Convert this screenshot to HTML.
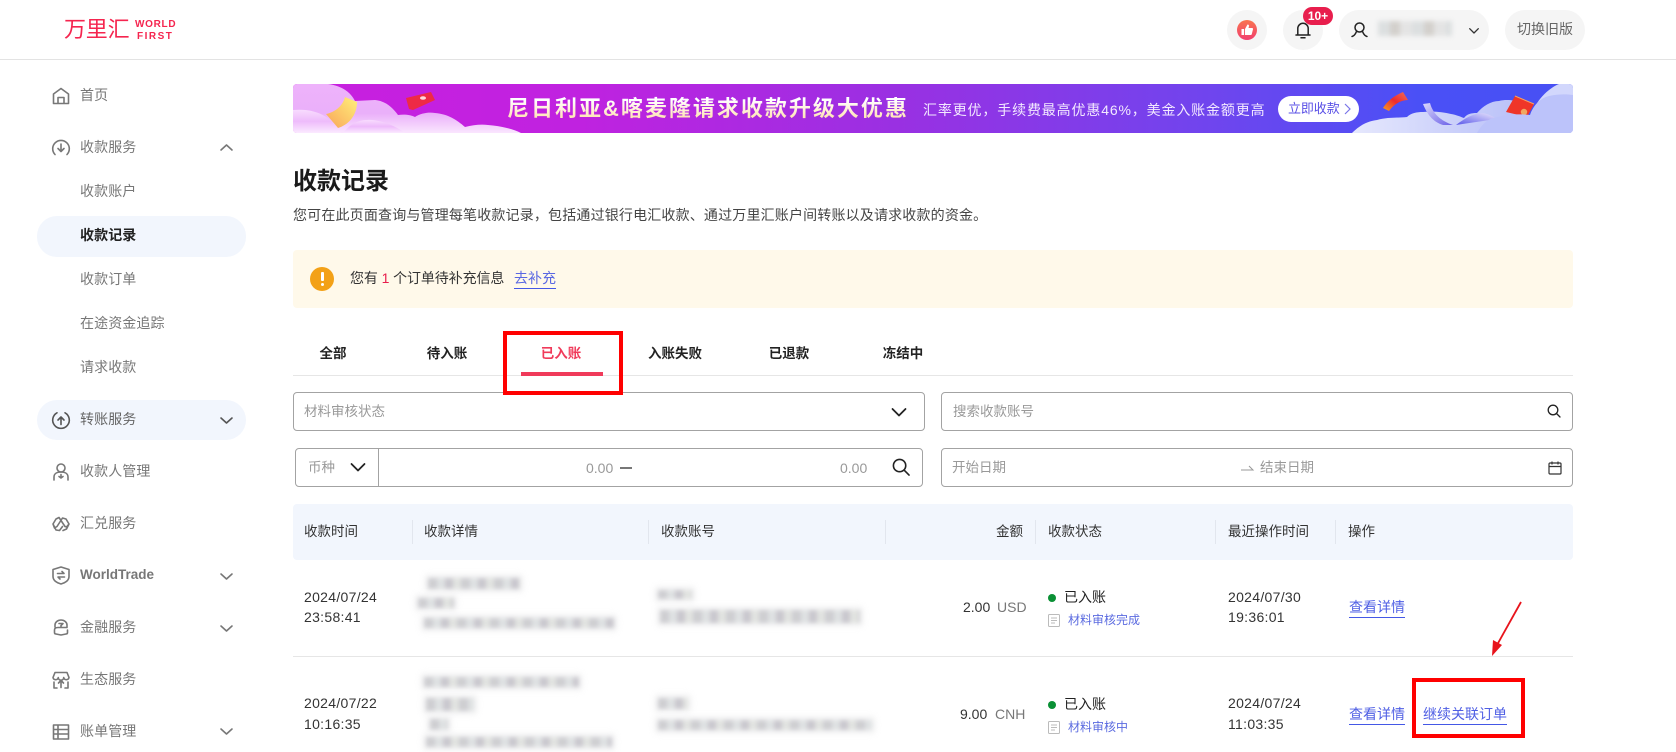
<!DOCTYPE html>
<html lang="zh"><head><meta charset="utf-8"><title>收款记录</title>
<style>
*{box-sizing:border-box;margin:0;padding:0}
html,body{width:1676px;height:752px;overflow:hidden;background:#fff}
body{position:relative;font-family:"Liberation Sans","Noto Sans CJK SC",sans-serif;font-size:14px;color:#222}
.a,.t{position:absolute;white-space:nowrap}
.t{line-height:20px}
.nav{color:#777;left:80px;letter-spacing:.1px}
.tab{font-weight:700;transform:translateX(-50%);color:#222;font-size:13.5px}
.h{color:#333;top:522px;font-size:13.5px}
.sep{position:absolute;top:520px;width:1px;height:24px;background:#e2e6ee}
.box{position:absolute;border:1px solid #a3a3a3;border-radius:4px}
.ph{color:#999}
.link{color:#4f5fe4;border-bottom:1px solid #4458e6;line-height:19px;position:absolute;white-space:nowrap}
.bl{position:absolute;filter:blur(2.2px);opacity:.9;box-shadow:0 0 6px 3px #eeeeef;background:repeating-linear-gradient(90deg,#c9c9cd 0 9px,#dcdfe0 9px 17px,#c4c2c9 17px 25px,#dfe1de 25px 33px)}
svg{position:absolute;overflow:visible}
.ic{fill:none;stroke:#777;stroke-width:1.6;stroke-linecap:round;stroke-linejoin:round}
</style></head><body>

<!-- header -->
<div class="a" style="left:0;top:59px;width:1676px;height:1px;background:#e3e3e3"></div>
<div class="a" style="left:64px;top:15px;font-size:22px;line-height:30px;color:#f5254f;letter-spacing:-.2px">万里汇</div>
<div class="a" style="left:135px;top:19px;font:700 10px/11px 'Liberation Sans',sans-serif;color:#f5254f;letter-spacing:.7px">WORLD</div>
<div class="a" style="left:137px;top:31px;font:700 10px/11px 'Liberation Sans',sans-serif;color:#f5254f;letter-spacing:1.5px">FIRST</div>

<div class="a" style="left:1227px;top:10px;width:40px;height:40px;border-radius:50%;background:#f5f5f5"></div>
<svg style="left:1237px;top:20px" width="20" height="20" viewBox="0 0 20 20"><defs><linearGradient id="th" x1="0" y1="0" x2="0" y2="1"><stop offset="0" stop-color="#f8744f"/><stop offset="1" stop-color="#f23f6f"/></linearGradient></defs><circle cx="10" cy="10" r="10" fill="url(#th)"/><path d="M4.500 9h2.600v6H4.500zM8 9l2.500-4.500c1.200 0 1.700.8 1.400 2L11.500 8H15c.8 0 1.200.6 1 1.300l-1.200 4.800c-.2.600-.6.900-1.200.9H8z" fill="#fff"/></svg>
<div class="a" style="left:1283px;top:10px;width:40px;height:40px;border-radius:50%;background:#f5f5f5"></div>
<svg style="left:1295px;top:21px" width="16" height="18" viewBox="0 0 16 18" fill="none" stroke="#222" stroke-width="1.500" stroke-linecap="round" stroke-linejoin="round"><path d="M1 14h14M2.800 14V7.500a5.200 5.200 0 0 1 10.400 0V14M6 16.800h4"/></svg>
<div class="a" style="left:1303px;top:7px;width:30px;height:18px;border-radius:9px;background:#e81e4d;color:#fff;font-size:12px;font-weight:700;line-height:18px;text-align:center">10+</div>
<div class="a" style="left:1339px;top:10px;width:150px;height:40px;border-radius:20px;background:#f5f5f5"></div>
<svg style="left:1351px;top:22px" width="17" height="16" viewBox="0 0 17 16" fill="none" stroke="#222" stroke-width="1.500" stroke-linecap="round"><circle cx="8.500" cy="5.500" r="4.500"/><path d="M5.500 9.500C4.500 12 3 14 1 14.500M11.500 9.500c1 2.500 2.500 4.500 4.500 5"/></svg>
<div class="a" style="left:1378px;top:21px;width:74px;height:15px;filter:blur(2.500px);background:repeating-linear-gradient(90deg,#dcdfe0 0 12px,#d3d0cc 12px 22px,#e4e4e4 22px 34px)"></div>
<svg style="left:1469px;top:28px" width="10" height="6" viewBox="0 0 10 6" fill="none" stroke="#333" stroke-width="1.300" stroke-linecap="round" stroke-linejoin="round"><path d="M.7.7L5 5 9.300.7"/></svg>
<div class="a" style="left:1505px;top:10px;width:80px;height:40px;border-radius:20px;background:#f5f5f5;color:#666;line-height:38px;text-align:center">切换旧版</div>

<!-- sidebar -->
<div class="a" style="left:37px;top:216px;width:209px;height:41px;border-radius:20px;background:#f2f6fd"></div>
<div class="a" style="left:37px;top:400px;width:209px;height:40px;border-radius:20px;background:#f2f6fd"></div>
<div class="t nav" style="top:85px">首页</div>
<div class="t nav" style="top:137px">收款服务</div>
<div class="t nav" style="top:181px">收款账户</div>
<div class="t nav" style="top:225px;color:#222;font-weight:700">收款记录</div>
<div class="t nav" style="top:269px">收款订单</div>
<div class="t nav" style="top:313px">在途资金追踪</div>
<div class="t nav" style="top:357px">请求收款</div>
<div class="t nav" style="top:409px;color:#666">转账服务</div>
<div class="t nav" style="top:461px">收款人管理</div>
<div class="t nav" style="top:513px">汇兑服务</div>
<div class="t nav" style="top:565px;font-weight:700;letter-spacing:0;font-size:13.500px">WorldTrade</div>
<div class="t nav" style="top:617px">金融服务</div>
<div class="t nav" style="top:669px">生态服务</div>
<div class="t nav" style="top:721px">账单管理</div>

<svg class="ic" style="left:52px;top:87px" width="18" height="18" viewBox="0 0 18 18"><path d="M1.500 16.500V7L9 1.500 16.500 7v9.500zM6 16.500v-6h6v6"/></svg>
<svg class="ic" style="left:52px;top:139px" width="18" height="18" viewBox="0 0 18 18"><path d="M3 15.500A8.300 8.300 0 1 1 15 15.500M9 5v7.500M6 9.500l3 3 3-3"/></svg>
<svg class="ic" style="left:52px;top:411px;stroke:#555" width="18" height="18" viewBox="0 0 18 18"><path d="M5 1.800A8.300 8.300 0 1 0 13 1.800M9 13.500V6M6 9l3-3 3 3"/></svg>
<svg class="ic" style="left:53px;top:463px" width="16" height="18" viewBox="0 0 16 18"><circle cx="8" cy="5" r="4"/><path d="M1 17v-3c0-3 2.500-5 7-5s7 2 7 5v3M8 11.500V15M6 13.500l2 1.500 2-1.500"/></svg>
<svg class="ic" style="left:52px;top:516px" width="18" height="16" viewBox="0 0 18 16"><path d="M1 8l3-5 3-1.500 6 9 1.500.5L17 8l-3-5-3.500-1L5 10.500 2.500 12zM1 8l3 6 3.500.5 3-4M17 8l-2.500 5-3.500 1.500"/></svg>
<svg class="ic" style="left:52px;top:566px" width="18" height="19" viewBox="0 0 18 19"><path d="M9 1l8 2.500v7c0 4-4 6.500-8 7.500-4-1-8-3.500-8-7.500v-7zM5.500 7.500H12L10 5.500M12.500 11H6l2 2"/></svg>
<svg class="ic" style="left:53px;top:619px" width="16" height="17" viewBox="0 0 16 17"><path d="M2 8V6a6 5 0 0 1 12 0v2.500H5c-2.500 0-3.500 1-3.500 2.500v2.500c0 1 .5 1.500 1.500 1.500l5 1 5-1c1 0 1.500-.5 1.500-1.500V11M6 4.500h4l-2 2v2"/></svg>
<svg class="ic" style="left:52px;top:671px" width="18" height="18" viewBox="0 0 18 18"><path d="M1 6.500L3 1.500h12l2 5a2.700 2.700 0 0 1-5.300 0 2.700 2.700 0 0 1-5.400 0 2.700 2.700 0 0 1-5.300 0zM2 11v6h3M16 11v6h-3M9 16.500V10M6.500 12L9 9.500l2.500 2.500"/></svg>
<svg class="ic" style="left:52px;top:723px" width="18" height="18" viewBox="0 0 18 18"><path d="M1.500 2h15v14h-15zM1.500 6.500h15M1.500 11h15M6 2v14"/></svg>

<svg class="ic" style="left:220px;top:144px" width="13" height="7" viewBox="0 0 13 7"><path d="M1 6l5.500-5L12 6"/></svg>
<svg class="ic" style="left:220px;top:417px;stroke:#555" width="13" height="7" viewBox="0 0 13 7"><path d="M1 1l5.500 5L12 1"/></svg>
<svg class="ic" style="left:220px;top:573px" width="13" height="7" viewBox="0 0 13 7"><path d="M1 1l5.500 5L12 1"/></svg>
<svg class="ic" style="left:220px;top:625px" width="13" height="7" viewBox="0 0 13 7"><path d="M1 1l5.500 5L12 1"/></svg>
<svg class="ic" style="left:220px;top:728px" width="13" height="7" viewBox="0 0 13 7"><path d="M1 1l5.500 5L12 1"/></svg>

<!-- banner -->
<div class="a" style="left:293px;top:84px;width:1280px;height:49px;border-radius:4px;overflow:hidden;background:linear-gradient(90deg,#c81fdf 0%,#c022e0 22%,#9a30e2 47%,#6f45ee 72%,#4a50f6 88%,#4750f4 100%)">
<svg style="left:0;top:0" width="1280" height="49" viewBox="0 0 1280 49">
<defs>
<linearGradient id="cl" x1="0" y1="0" x2="0" y2="1"><stop offset="0" stop-color="#eeb2fb"/><stop offset=".6" stop-color="#eab0fa"/><stop offset="1" stop-color="#fae6fe"/></linearGradient>
<linearGradient id="cl2" x1="0" y1="0" x2="0" y2="1"><stop offset="0" stop-color="#f8dcfe"/><stop offset=".5" stop-color="#eebbfb"/><stop offset="1" stop-color="#fbeaff"/></linearGradient>
<linearGradient id="cr" x1="0" y1="0" x2="1" y2="0"><stop offset="0" stop-color="#e6e8fd"/><stop offset="1" stop-color="#b6bef8"/></linearGradient>
<linearGradient id="moon" x1="1" y1="0" x2="0" y2="1"><stop offset="0" stop-color="#fff07a"/><stop offset="1" stop-color="#f9a45a"/></linearGradient>
<linearGradient id="rb" x1="0" y1="1" x2="1" y2="0"><stop offset="0" stop-color="#f8a020"/><stop offset=".5" stop-color="#ee2a2e"/><stop offset="1" stop-color="#f0705a"/></linearGradient>
<linearGradient id="rp" x1="0" y1="0" x2="1" y2="1"><stop offset="0" stop-color="#dcd8fb"/><stop offset="1" stop-color="#6a60e8"/></linearGradient>
<linearGradient id="rp2" x1="0" y1="1" x2="1" y2="0"><stop offset="0" stop-color="#5a58ea"/><stop offset="1" stop-color="#ece8fd"/></linearGradient>
</defs>
<!-- left clouds -->
<path d="M0 0H35C50 2 58 9 62 17L82 16C93 17 100 24 105 31C112 30 118 31 122 33C128 29 136 28 142 29C155 30 164 36 172 43C180 41 188 40 195 41C208 42 220 45 228 49H0z" fill="url(#cl)"/>
<path d="M52 13L64 18C64 32 55 41 45 44L33 30C43 28 50 21 52 13z" fill="url(#moon)"/>
<path d="M0 26C22 24 38 32 48 49H0z" fill="url(#cl2)"/>
<path d="M50 49C57 40 65 36 74 36C84 35 100 40 112 49z" fill="url(#cl2)"/>
<path d="M113 14L138 8l4 8-22 10-4-1z" fill="#ee2a46"/>
<ellipse cx="130" cy="14" rx="3" ry="1.800" fill="#ffd8dc"/>
<!-- right clouds -->
<path d="M1239 30C1244 14 1258 3 1266 0H1280V49H1230z" fill="#d2d7fc"/>
<path d="M1059 49C1068 40 1076 37 1084 36C1095 33 1105 34 1114 33C1118 29 1124 28 1130 28C1140 27 1150 28 1158 30C1164 31 1168 33 1171 34C1174 30 1178 29 1184 29C1190 22 1198 17 1206 17C1214 15 1222 16 1232 20L1240 49z" fill="url(#cr)"/>
<path d="M1130 20L1137 19C1140 30 1148 37 1160 41L1150 41C1140 38 1134 30 1130 20z" fill="url(#rp)"/>
<path d="M1163 41C1172 34 1180 30 1188 29C1192 29 1198 31 1204 35C1190 37 1176 39 1163 41z" fill="url(#rp2)"/>
<path d="M1222 12L1241 20 1234 33 1213 28z" fill="#ef3528"/>
<path d="M1222 12L1241 20" stroke="#f8a060" stroke-width="1"/>
<circle cx="1231" cy="28" r="3.200" fill="#f0a860"/>
<path d="M1184 49C1190 38 1197 34 1205 33C1215 30 1228 30 1237 31C1240 22 1247 14 1256 12C1265 10 1273 10 1280 11V49z" fill="#bcc3fa"/>
<path d="M1090 24C1095 16 1103 11 1110 8L1115 16C1108 16 1101 20 1096 27z" fill="url(#rb)"/>
</svg>
</div>
<div class="a" style="left:507px;top:94px;font-size:22px;line-height:30px;font-weight:700;letter-spacing:2px;background:linear-gradient(180deg,#fff 20%,#ffe2b0 85%);-webkit-background-clip:text;background-clip:text;color:transparent">尼日利亚&amp;喀麦隆请求收款升级大优惠</div>
<div class="a" style="left:923px;top:100px;line-height:21px;color:#f3e9ff;letter-spacing:.85px">汇率更优，手续费最高优惠46%，美金入账金额更高</div>
<div class="a" style="left:1278px;top:96px;width:81px;height:26px;border-radius:13px;background:#fff"></div>
<div class="a" style="left:1288px;top:99px;line-height:20px;color:#5a50e6;font-size:13px;letter-spacing:-.1px">立即收款</div>
<svg style="left:1344px;top:103px" width="7" height="12" viewBox="0 0 7 12" fill="none" stroke="#7a75e8" stroke-width="1.200"><path d="M1 1l5 5-5 5"/></svg>

<!-- title -->
<div class="a" style="left:293px;top:165px;font-size:24px;line-height:34px;font-weight:700;color:#1a1a1a">收款记录</div>
<div class="t" style="left:293px;top:205px;color:#444;letter-spacing:.17px">您可在此页面查询与管理每笔收款记录，包括通过银行电汇收款、通过万里汇账户间转账以及请求收款的资金。</div>

<!-- alert -->
<div class="a" style="left:293px;top:250px;width:1280px;height:58px;border-radius:4px;background:#fff9ea"></div>
<div class="a" style="left:310px;top:267px;width:24px;height:24px;border-radius:50%;background:#f3a117"></div>
<div class="a" style="left:320.500px;top:272px;width:3px;height:9px;background:#fff;border-radius:1px"></div>
<div class="a" style="left:320.500px;top:283px;width:3px;height:3px;background:#fff;border-radius:50%"></div>
<div class="t" style="left:350px;top:268px;color:#333;letter-spacing:-.1px">您有 <span style="color:#e81e4d">1</span> 个订单待补充信息</div>
<div class="link" style="left:514px;top:269px;color:#5a68e2">去补充</div>

<!-- tabs -->
<div class="a" style="left:293px;top:375px;width:1280px;height:1px;background:#e6e6e6"></div>
<div class="t tab" style="left:333px;top:344px">全部</div>
<div class="t tab" style="left:447px;top:344px">待入账</div>
<div class="t tab" style="left:561px;top:344px;color:#f03a5a">已入账</div>
<div class="t tab" style="left:675px;top:344px">入账失败</div>
<div class="t tab" style="left:789px;top:344px">已退款</div>
<div class="t tab" style="left:903px;top:344px">冻结中</div>
<div class="a" style="left:521px;top:372px;width:82px;height:4px;background:#f03a5a"></div>

<!-- filters -->
<div class="box" style="left:293px;top:392px;width:632px;height:39px"></div>
<div class="t ph" style="left:304px;top:402px;font-size:13.500px">材料审核状态</div>
<svg style="left:891px;top:408px" width="16" height="9" viewBox="0 0 16 9" fill="none" stroke="#222" stroke-width="1.800" stroke-linecap="round" stroke-linejoin="round"><path d="M1.500 1L8 7.500 14.500 1"/></svg>
<div class="box" style="left:941px;top:392px;width:632px;height:39px"></div>
<div class="t ph" style="left:953px;top:402px;font-size:13.500px">搜索收款账号</div>
<svg style="left:1547px;top:404px" width="14" height="14" viewBox="0 0 14 14" fill="none" stroke="#222" stroke-width="1.300" stroke-linecap="round"><circle cx="6" cy="6" r="4.800"/><path d="M9.500 9.500l3.500 3.500"/></svg>

<div class="box" style="left:295px;top:448px;width:628px;height:39px"></div>
<div class="a" style="left:378px;top:448px;width:1px;height:39px;background:#a3a3a3"></div>
<div class="t ph" style="left:308px;top:458px;font-size:13.500px">币种</div>
<svg style="left:350px;top:463px" width="16" height="9" viewBox="0 0 16 9" fill="none" stroke="#222" stroke-width="1.800" stroke-linecap="round" stroke-linejoin="round"><path d="M1.500 1L8 7.500 14.500 1"/></svg>
<div class="t ph" style="left:586px;top:458px">0.00</div>
<div class="a" style="left:620px;top:467px;width:12px;height:2px;background:#777"></div>
<div class="t ph" style="left:840px;top:458px">0.00</div>
<svg style="left:892px;top:458px" width="18" height="18" viewBox="0 0 19 19" fill="none" stroke="#222" stroke-width="1.700" stroke-linecap="round"><circle cx="8" cy="8" r="6.500"/><path d="M13 13l5 5"/></svg>

<div class="box" style="left:941px;top:448px;width:632px;height:39px"></div>
<div class="t ph" style="left:952px;top:458px;font-size:13.500px">开始日期</div>
<svg style="left:1241px;top:465px" width="13" height="7" viewBox="0 0 13 7" fill="none" stroke="#999" stroke-width="1"><path d="M0 5h12L8 1"/></svg>
<div class="t ph" style="left:1260px;top:458px;font-size:13.500px">结束日期</div>
<svg style="left:1548px;top:461px" width="14" height="14" viewBox="0 0 14 14" fill="none" stroke="#333" stroke-width="1.200"><rect x="1" y="2" width="12" height="11" rx="1"/><path d="M1 5.500h12M4 .5v3M10 .5v3"/></svg>

<!-- table head -->
<div class="a" style="left:293px;top:504px;width:1280px;height:56px;border-radius:4px;background:#f2f6fd"></div>
<div class="t h" style="left:304px">收款时间</div>
<div class="t h" style="left:424px">收款详情</div>
<div class="t h" style="left:661px">收款账号</div>
<div class="t h" style="left:996px">金额</div>
<div class="t h" style="left:1048px">收款状态</div>
<div class="t h" style="left:1228px">最近操作时间</div>
<div class="t h" style="left:1348px">操作</div>
<div class="sep" style="left:412px"></div><div class="sep" style="left:648px"></div><div class="sep" style="left:885px"></div><div class="sep" style="left:1035px"></div><div class="sep" style="left:1215px"></div><div class="sep" style="left:1335px"></div>

<!-- row 1 -->
<div class="a" style="left:293px;top:656px;width:1280px;height:1px;background:#e6e6e6"></div>
<div class="t" style="left:304px;top:587px;letter-spacing:.3px;color:#333">2024/07/24</div>
<div class="t" style="left:304px;top:607px;letter-spacing:.3px;color:#333">23:58:41</div>
<div class="bl" style="left:428px;top:578px;width:92px;height:11px"></div>
<div class="bl" style="left:418px;top:598px;width:36px;height:10px"></div>
<div class="bl" style="left:424px;top:618px;width:190px;height:10px"></div>
<div class="bl" style="left:658px;top:590px;width:34px;height:9px"></div>
<div class="bl" style="left:660px;top:610px;width:200px;height:13px"></div>
<div class="t" style="left:963px;top:597px;color:#333">2.00</div>
<div class="t" style="left:997px;top:597px;color:#777">USD</div>
<div class="a" style="left:1048px;top:594px;width:8px;height:8px;border-radius:50%;background:#0a9035"></div>
<div class="t" style="left:1064px;top:587px;color:#222">已入账</div>
<svg style="left:1048px;top:614px" width="12" height="13" viewBox="0 0 12 13" fill="none" stroke="#bbb" stroke-width="1"><rect x=".5" y=".5" width="11" height="12" rx="1"/><path d="M3 4h6M3 6.500h6M3 9h4"/></svg>
<div class="a" style="left:1068px;top:612px;font-size:12px;line-height:17px;color:#5b6be0">材料审核完成</div>
<div class="t" style="left:1228px;top:587px;letter-spacing:.3px;color:#333">2024/07/30</div>
<div class="t" style="left:1228px;top:607px;letter-spacing:.3px;color:#333">19:36:01</div>
<div class="link" style="left:1349px;top:598px">查看详情</div>

<!-- row 2 -->
<div class="t" style="left:304px;top:693px;letter-spacing:.3px;color:#333">2024/07/22</div>
<div class="t" style="left:304px;top:714px;letter-spacing:.3px;color:#333">10:16:35</div>
<div class="bl" style="left:424px;top:677px;width:155px;height:10px"></div>
<div class="bl" style="left:426px;top:698px;width:48px;height:13px"></div>
<div class="bl" style="left:430px;top:719px;width:18px;height:11px"></div>
<div class="bl" style="left:426px;top:737px;width:186px;height:10px"></div>
<div class="bl" style="left:658px;top:698px;width:30px;height:11px"></div>
<div class="bl" style="left:658px;top:720px;width:214px;height:10px"></div>
<div class="t" style="left:960px;top:704px;color:#333">9.00</div>
<div class="t" style="left:995px;top:704px;color:#777">CNH</div>
<div class="a" style="left:1048px;top:701px;width:8px;height:8px;border-radius:50%;background:#0a9035"></div>
<div class="t" style="left:1064px;top:694px;color:#222">已入账</div>
<svg style="left:1048px;top:721px" width="12" height="13" viewBox="0 0 12 13" fill="none" stroke="#bbb" stroke-width="1"><rect x=".5" y=".5" width="11" height="12" rx="1"/><path d="M3 4h6M3 6.500h6M3 9h4"/></svg>
<div class="a" style="left:1068px;top:719px;font-size:12px;line-height:17px;color:#5b6be0">材料审核中</div>
<div class="t" style="left:1228px;top:693px;letter-spacing:.3px;color:#333">2024/07/24</div>
<div class="t" style="left:1228px;top:714px;letter-spacing:.3px;color:#333">11:03:35</div>
<div class="link" style="left:1349px;top:705px">查看详情</div>
<div class="link" style="left:1423px;top:705px;font-size:14px">继续关联订单</div>

<!-- annotations -->
<div class="a" style="left:503px;top:331px;width:120px;height:64px;border:4px solid #f00"></div>
<div class="a" style="left:1412px;top:678px;width:113px;height:60px;border:4px solid #f00"></div>
<svg style="left:1485px;top:598px" width="40" height="62" viewBox="0 0 40 62"><path d="M36 4L12 47" stroke="#e8141c" stroke-width="1.800" fill="none"/><path d="M7 58l1-16 9 5z" fill="#e8141c"/></svg>
</body></html>
